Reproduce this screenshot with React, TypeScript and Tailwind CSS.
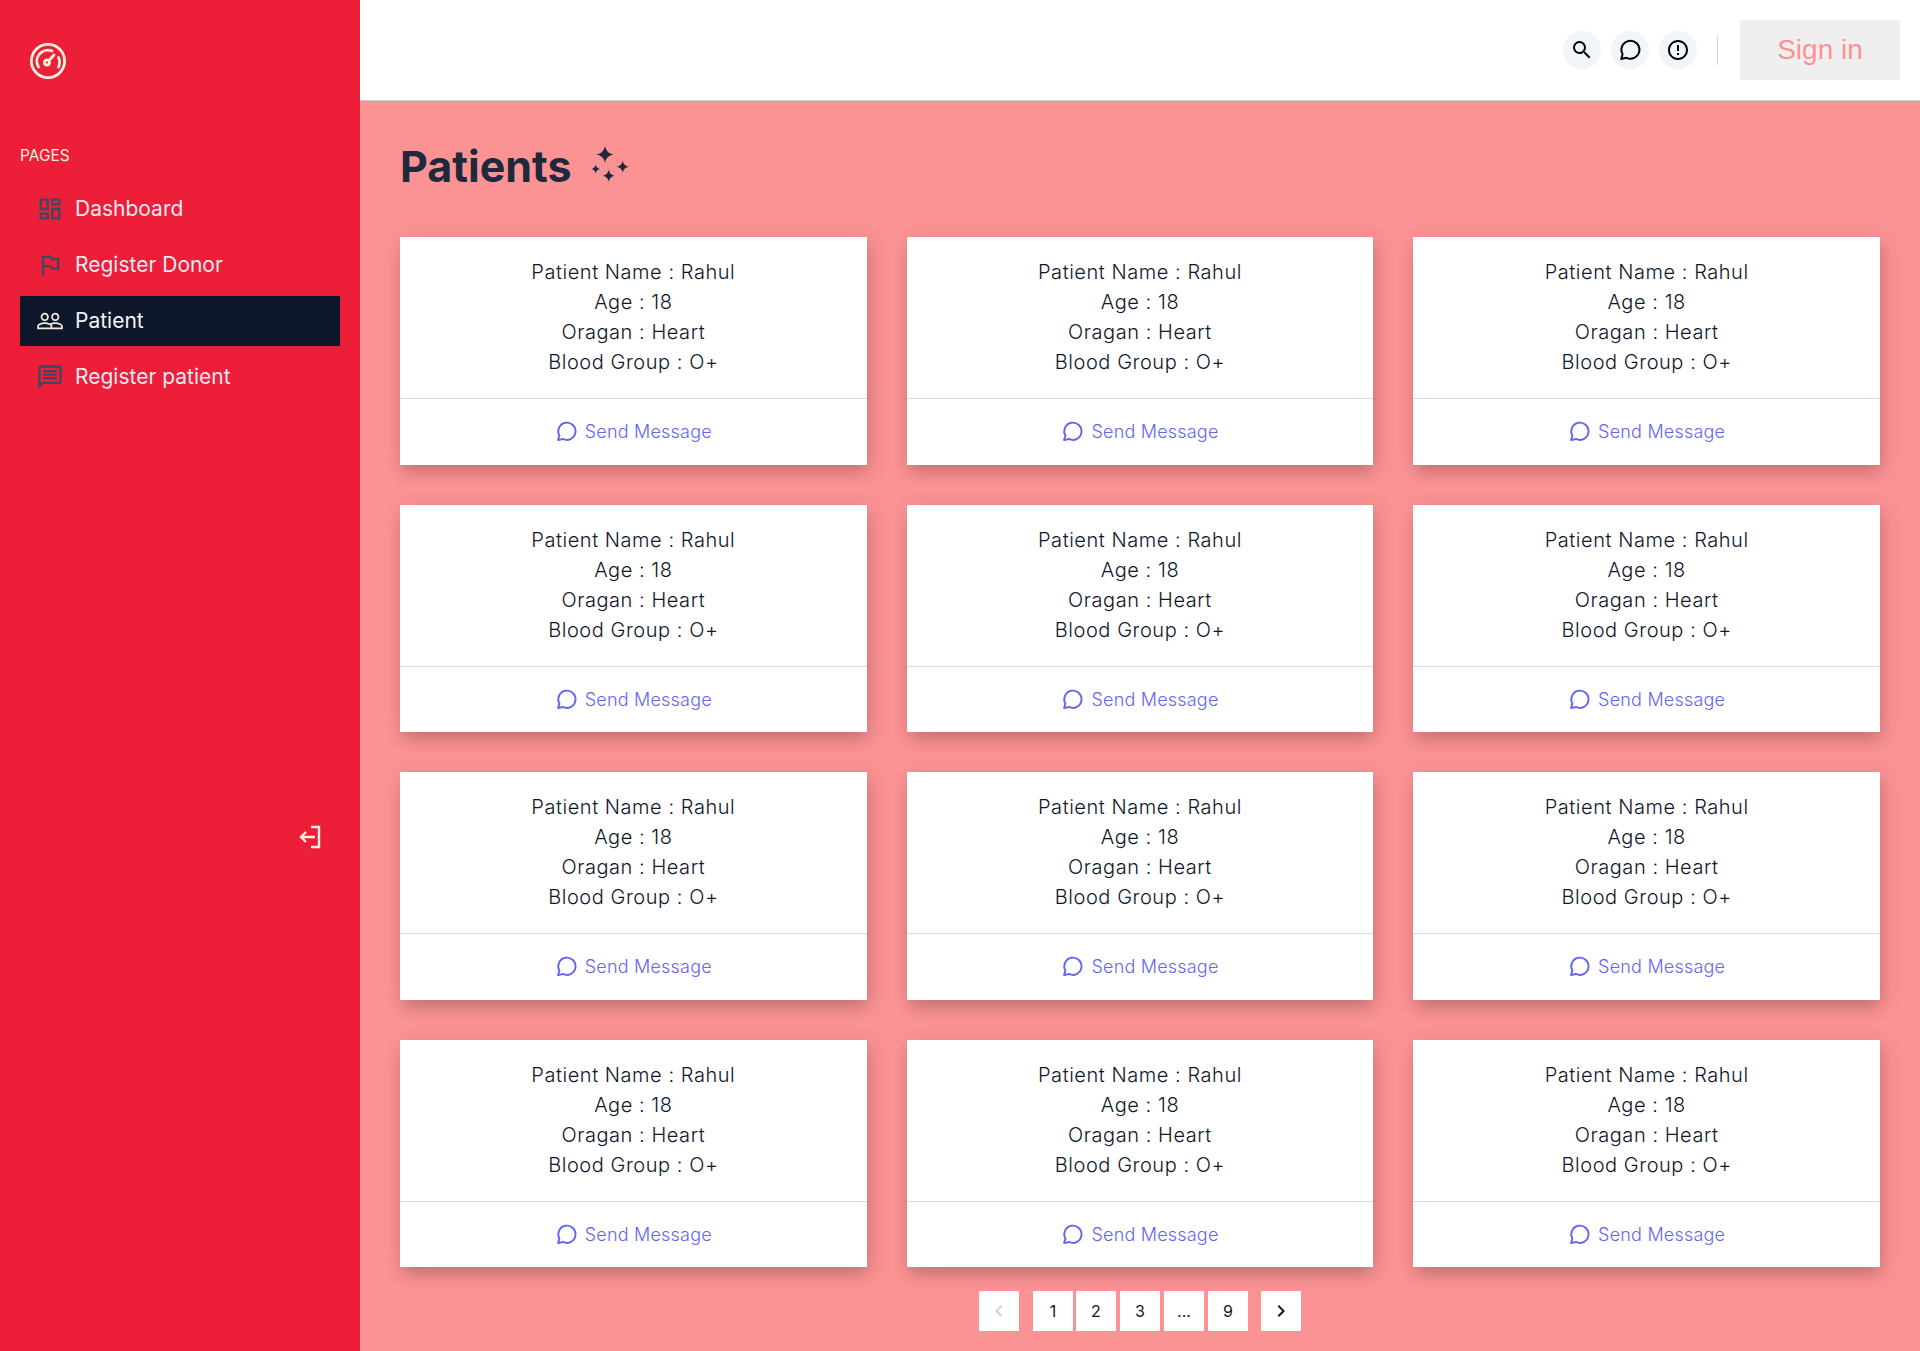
import React from "react";
import { MdOutlineDashboard, MdOutlinedFlag, MdPeopleOutline, MdOutlineMessage, MdSearch, MdErrorOutline, MdChevronLeft, MdChevronRight } from "react-icons/md";

const font = "font-['Inter','Liberation_Sans',sans-serif]";

function Logo() {
  return (
    <svg width="38" height="38" viewBox="0 0 38 38" fill="none" stroke="#fdeee0" strokeWidth="2.8" strokeLinecap="round">
      <circle cx="19" cy="19" r="16.6" />
      <path d="M9.5 25 A11 11 0 0 1 23 9" />
      <path d="M29.5 15.5 A11 11 0 0 1 29.5 25" />
      <circle cx="18" cy="20.5" r="2.5" />
      <path d="M20 18.5 L25 13" />
    </svg>
  );
}

function Logout() {
  return (
    <svg width="26" height="26" viewBox="0 0 26 26" fill="none" stroke="#fdeee0" strokeWidth="2.4">
      <path d="M14 3 H22 V23 H14" />
      <path d="M18 13 H4 M9 8 L4 13 L9 18" />
    </svg>
  );
}

function ChatBubble({ className = "" }: { className?: string }) {
  return (
    <svg className={className} viewBox="0 0 24 24" fill="none" stroke="currentColor" strokeWidth="2" strokeLinejoin="round">
      <path d="M3.2 21 L4.6 16.2 A9 9 0 1 1 8.4 19.8 Z" />
    </svg>
  );
}

function Sparkles() {
  const star = (x: number, y: number, r: number, k: number) => {
    const q = r * 0.14;
    return (
      <path
        key={k}
        d={`M${x} ${y - r} Q${x + q} ${y - q} ${x + r} ${y} Q${x + q} ${y + q} ${x} ${y + r} Q${x - q} ${y + q} ${x - r} ${y} Q${x - q} ${y - q} ${x} ${y - r} Z`}
      />
    );
  };
  return (
    <svg width="50" height="50" viewBox="0 0 50 50" fill="#1e293b">
      {star(20, 14.5, 8.5, 0)}
      {star(37.7, 26.7, 6, 1)}
      {star(10.7, 29, 4.5, 2)}
      {star(23.7, 35.7, 6, 3)}
    </svg>
  );
}

const nav = [
  { label: "Dashboard", Icon: MdOutlineDashboard },
  { label: "Register Donor", Icon: MdOutlinedFlag },
  { label: "Patient", Icon: MdPeopleOutline, active: true },
  { label: "Register patient", Icon: MdOutlineMessage },
];

function Sidebar() {
  return (
    <aside className="w-[360px] shrink-0 bg-[#ec1e38] flex flex-col px-5 relative">
      <div className="h-[122px] flex items-center pl-[9px]">
        <Logo />
      </div>
      <div className="mt-[24px] text-[15.5px] leading-5 text-[#fdeee0]">PAGES</div>
      <nav className="mt-[18px] flex flex-col gap-[6px]">
        {nav.map(({ label, Icon, active }) => (
          <div key={label} className={`h-[50px] flex items-center gap-[11px] pl-4 ${active ? "bg-[#0f172a] text-[#f1f5f9]" : "text-[#e8e8f2]"}`}>
            <Icon className={`w-7 h-7 shrink-0 ${active ? "text-[#f0e9df]" : "text-[#3f4660]"}`} />
            <span className="text-[21px]">{label}</span>
          </div>
        ))}
      </nav>
      <div className="absolute left-[297px] top-[824px]">
        <Logout />
      </div>
    </aside>
  );
}

function Header() {
  const c = "w-[38px] h-[38px] rounded-full bg-[#f1f5f9] flex items-center justify-center text-black";
  return (
    <header className="h-[101px] shrink-0 bg-white border-b border-[#cfcfcf] flex items-center justify-end pr-5">
      <div className="flex items-center gap-[10px]">
        <div className={c}><MdSearch className="w-6 h-6" /></div>
        <div className={c}><ChatBubble className="w-6 h-6" /></div>
        <div className={c}><MdErrorOutline className="w-6 h-6" /></div>
      </div>
      <div className="w-px h-[30px] bg-[#d8d8d8] ml-5 mr-[22px]" />
      <button className="w-40 h-[60px] bg-[#efefef] text-[#fc9292] text-[28px] font-['Liberation_Sans',sans-serif]">Sign in</button>
    </header>
  );
}

function Card() {
  return (
    <div className="bg-white shadow-[0_10px_15px_-3px_rgba(0,0,0,0.15),4px_4px_20px_rgba(0,0,0,0.12)] flex flex-col">
      <div className="py-5 text-center text-[20px] font-[350] leading-[30px] text-[#0f172a] tracking-[0.55px] border-b border-[#d9d9d9] h-[162px]">
        <div>Patient Name : Rahul</div>
        <div>Age : 18</div>
        <div>Oragan : Heart</div>
        <div>Blood Group : O+</div>
      </div>
      <div className="h-[65.6px] flex items-center justify-center gap-[7px] text-[#6366f1]">
        <ChatBubble className="w-[23px] h-[23px]" />
        <span className="text-[18px] font-[350] tracking-[0.2px]">Send Message</span>
      </div>
    </div>
  );
}

function PageBtn({ children, className = "" }: { children: React.ReactNode; className?: string }) {
  return <div className={`w-10 h-10 bg-white flex items-center justify-center text-[16px] text-[#111827] ${className}`}>{children}</div>;
}

export default function App() {
  return (
    <div className={`h-[1351px] w-[1920px] flex overflow-hidden ${font}`}>
      <Sidebar />
      <div className="flex-1 flex flex-col bg-[#fb9294]">
        <Header />
        <main className="flex-1 px-10">
          <div className="h-[136px] pt-[35px] flex items-start gap-[13px]">
            <h1 className="text-[43px] leading-[60px] font-bold text-[#1e293b]">Patients</h1>
            <div className="mt-[4px]"><Sparkles /></div>
          </div>
          <div className="grid grid-cols-3 gap-x-10 gap-y-10">
            {Array.from({ length: 12 }).map((_, i) => <Card key={i} />)}
          </div>
          <div className="mt-[24px] flex justify-center">
            <PageBtn className="mr-[14px] text-[#d4d4d4]"><MdChevronLeft className="w-6 h-6" /></PageBtn>
            <div className="flex gap-[3px]">
              <PageBtn className="text-[#4f46e5]">1</PageBtn>
              <PageBtn>2</PageBtn>
              <PageBtn className="ml-px">3</PageBtn>
              <PageBtn className="ml-px">...</PageBtn>
              <PageBtn className="ml-px">9</PageBtn>
            </div>
            <PageBtn className="ml-[13px] text-[#111827]"><MdChevronRight className="w-6 h-6" /></PageBtn>
          </div>
        </main>
      </div>
    </div>
  );
}
